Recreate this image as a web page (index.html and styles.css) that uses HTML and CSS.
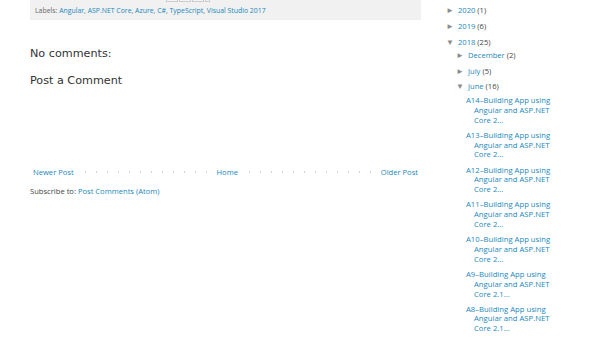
FILE: index.html
```html
<!DOCTYPE html>
<html lang="en">
<head>
  <meta charset="UTF-8" />
  <title>Angular and ASP.NET Core</title>
  <link rel="stylesheet" href="styles.css">
</head>
<body>
  <div class="page">
    <div class="main">
      <div class="post-footer">
        <div class="share">
          <span class="share-btn"></span>
          <span class="share-btn"></span>
          <span class="share-btn"></span>
          <span class="share-btn small"></span>
        </div>
        <div class="labels">Labels:
          <a href="#">Angular</a>, <a href="#">ASP.NET Core</a>, <a href="#">Azure</a>, <a href="#">C#</a>, <a href="#">TypeScript</a>, <a href="#">Visual Studio 2017</a>
        </div>
      </div>

      <h4 class="comments-title">No comments:</h4>
      <h4 class="comment-form-title">Post a Comment</h4>

      <div class="pager">
        <a href="#" class="newer">Newer Post</a>
        <span class="dots"></span>
        <a href="#" class="home">Home</a>
        <span class="dots"></span>
        <a href="#" class="older">Older Post</a>
      </div>
      <div class="feed">Subscribe to: <a href="#">Post Comments (Atom)</a></div>
    </div>

    <div class="sidebar">
      <ul class="archive">
        <li><span class="toggle">&#9658;</span><a href="#">2020</a> <span class="count">(1)</span></li>
        <li><span class="toggle">&#9658;</span><a href="#">2019</a> <span class="count">(6)</span></li>
        <li><span class="toggle open">&#9660;</span><a href="#">2018</a> <span class="count">(25)</span>
          <ul class="archive">
            <li><span class="toggle">&#9658;</span><a href="#">December</a> <span class="count">(2)</span></li>
            <li><span class="toggle">&#9658;</span><a href="#">July</a> <span class="count">(5)</span></li>
            <li><span class="toggle open">&#9660;</span><a href="#">June</a> <span class="count">(16)</span>
              <ul class="posts">
                <li><a href="#">A14–Building App using Angular and ASP.NET Core 2...</a></li>
                <li><a href="#">A13–Building App using Angular and ASP.NET Core 2...</a></li>
                <li><a href="#">A12–Building App using Angular and ASP.NET Core 2...</a></li>
                <li><a href="#">A11–Building App using Angular and ASP.NET Core 2...</a></li>
                <li><a href="#">A10–Building App using Angular and ASP.NET Core 2...</a></li>
                <li><a href="#">A9–Building App using Angular and ASP.NET Core 2.1...</a></li>
                <li><a href="#">A8–Building App using Angular and ASP.NET Core 2.1...</a></li>
              </ul>
            </li>
          </ul>
        </li>
      </ul>
    </div>
  </div>
</body>
</html>
```

FILE: styles.css
```css
* {
  box-sizing: border-box;
  margin: 0; padding: 0;
}
body {
  font-family: "Open Sans", "Noto Sans", sans-serif;
  color: #666;
  background: #fff;
  overflow: hidden;
}
a {
  color: #2288bb;
  text-decoration: none;
}
.page {
  display: flex;
  padding-left: 30px;
}
.main {
  width: 391px;
}
.post-footer {
  background: #f1f1f1;
  height: 20px;
  padding-left: 5px;
  border-bottom: 1px solid #eee;
}
.share {
  display: flex;
  height: 2px;
  padding-left: 131px;
  gap: 1px;
}
.share-btn {
  width: 12px;
  height: 2px;
  border: 1px solid #ccc;
  border-top: none;
  background: #f4f4f4;
}
.share-btn.small { width: 5px; }
.labels {
  font-size: 6.9px;
  line-height: 10px;
  margin-top: 4px;
}
h4 {
  font-family: "DejaVu Sans", sans-serif;
  font-weight: normal;
  color: #333;
  font-size: 11.2px;
  line-height: 16px;
}
.comments-title {
  margin-top: 26px;
}
.comment-form-title {
  margin-top: 11px;
}
.pager {
  display: flex;
  align-items: center;
  margin-top: 77px;
  padding: 0 3px;
  font-size: 7.6px;
  line-height: 12px;
}
.dots {
  flex: 1;
  height: 2px;
  margin: 0 4px;
  background: radial-gradient(circle, #d4d4d4 0.9px, transparent 1.1px) 2px 0 / 11px 2px repeat-x;
}
.feed {
  margin-top: 7px;
  font-size: 7.6px;
  line-height: 12px;
  color: #444;
}
.sidebar {
  margin-left: 25px;
  width: 124px;
  font-size: 7.6px;
}
.archive {
  list-style: none;
}
.sidebar > .archive {
  margin-top: 4px;
}
.archive li {
  line-height: 12px;
  margin-bottom: 4px;
}
.archive .archive {
  margin-top: 1px;
  padding-left: 10px;
}
.archive .archive > li {
  margin-bottom: 3.5px;
}
.toggle {
  display: inline-block;
  width: 12px;
  font-size: 8px;
  line-height: 0;
  color: #8c8c8c;
}
.count {
  color: #444;
}
.posts {
  list-style: none;
  margin-top: 4px;
  padding-left: 10px;
}
.posts li {
  font-size: 7.7px;
  line-height: 9.8px;
  margin-bottom: 5.4px;
  padding-left: 8px;
  text-indent: -8px;
  width: 100px;
}
```
